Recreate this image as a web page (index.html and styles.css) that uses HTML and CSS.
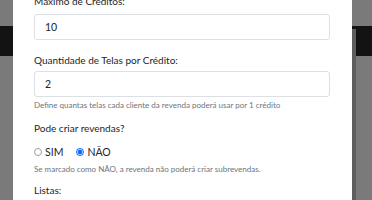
FILE: index.html
```html
<!DOCTYPE html>
<html lang="pt-BR">
<head>
    <meta charset="UTF-8">
    <meta name="viewport" content="width=device-width, initial-scale=1.0">
    <title>Revenda</title>
    <link rel="stylesheet" href="styles.css">
</head>
<body>

    <div class="page">
        <div class="navbar"></div>
        <div class="scroll-strip"></div>
    </div>

    <div class="modal">
        <div class="modal-body">
            <div class="form-group first">
                <label class="form-label">Máximo de Créditos:</label>
                <input class="form-control" type="text" value="10">
            </div>

            <div class="form-group has-help">
                <label class="form-label">Quantidade de Telas por Crédito:</label>
                <input class="form-control" type="text" value="2">
                <small class="form-text">Define quantas telas cada cliente da revenda poderá usar por 1 crédito</small>
            </div>

            <div class="form-group has-help last-help">
                <label class="form-label">Pode criar revendas?</label>
                <div class="radio-row">
                    <label class="radio"><span class="radio-dot"></span>SIM</label>
                    <label class="radio"><span class="radio-dot checked"></span>NÃO</label>
                </div>
                <small class="form-text tight">Se marcado como NÃO, a revenda não poderá criar subrevendas.</small>
            </div>

            <div class="form-group">
                <label class="form-label">Listas:</label>
            </div>
        </div>
    </div>

</body>
</html>
```

FILE: styles.css
```css
body {
    margin: 0;
    overflow: hidden;
    height: 200px;
    background-color: #7a7a7a;
    font-family: 'Lato', 'Open Sans', sans-serif;
    color: #212529;
}

.page {
    height: 200px;
    padding-top: 26px;
    box-sizing: border-box;
}

.navbar {
    height: 30px;
    background: #131313;
}

/* modal sits over the dimmed page */
.modal {
    position: absolute;
    top: -15px;
    left: 13px;
    width: 339px;
    height: 215px;
    background: #fff;
}

.modal-body {
    padding: 8px 22px 0 21px;
}

.form-group {
    margin-bottom: 12px;
}

.form-group.has-help {
    margin-bottom: 10px;
}

.form-group.last-help {
    margin-bottom: 8px;
}

.form-label {
    display: block;
    font-size: 10px;
    line-height: 16px;
    margin-bottom: 3px;
}

.form-group.first .form-label {
    margin-bottom: 5px;
}

.form-control {
    display: block;
    box-sizing: border-box;
    width: 100%;
    height: 26px;
    padding: 0 10px;
    font-family: inherit;
    font-size: 10.5px;
    color: #212529;
    border: 1px solid #dcdfe3;
    border-radius: 3px;
    background: #fff;
    outline: none;
}

.form-text {
    display: block;
    margin-top: 3px;
    font-size: 8px;
    line-height: 10px;
    color: #6c757d;
}

.form-text.tight {
    margin-top: 5px;
}

.radio-row {
    display: flex;
    gap: 13px;
    height: 14px;
    margin-top: 9px;
    align-items: center;
}

.radio {
    display: flex;
    align-items: center;
    gap: 3px;
    font-size: 10.5px;
}

.radio-dot {
    width: 6px;
    height: 6px;
    border: 1px solid #9aa0a6;
    border-radius: 50%;
}

.radio-dot.checked {
    border-color: #0d6efd;
    background: radial-gradient(circle, #0d6efd 0 2px, #cfe2ff 2.5px);
}

.scroll-strip {
    position: absolute;
    top: 29px;
    left: 352px;
    width: 4px;
    height: 171px;
    background: #5e5e5e;
}
```
